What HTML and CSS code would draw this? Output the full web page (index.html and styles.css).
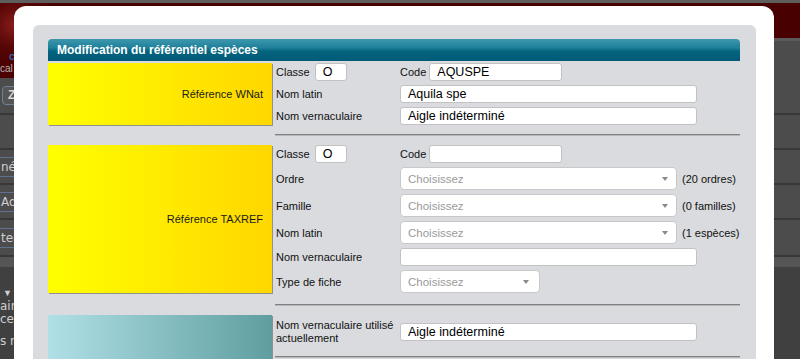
FILE: index.html
```html
<!DOCTYPE html>
<html lang="fr">
<head>
<meta charset="utf-8">
<title>Modification du référentiel espèces</title>
<link rel="stylesheet" href="styles.css">
</head>
<body>
<div class="page">
  <div class="topbar"></div>
  <div class="banner">
    <div class="logo">
      <span class="logo-c">c</span>
      <span class="logo-text">cal</span>
    </div>
    <div class="banner-main">
      <div class="banner-red"></div>
      <div class="banner-gray"></div>
    </div>
  </div>
  <div class="bg-rows">
    <div class="bg-row r1"><span class="bg-btn">Z</span></div>
    <div class="bg-row r2"></div>
    <div class="bg-row r3"><span class="bg-field">né</span></div>
    <div class="bg-row r4"><span class="bg-field">Ad</span></div>
    <div class="bg-row r5"><span class="bg-field">ter</span></div>
    <div class="bg-row r6"></div>
    <div class="bg-row r7">
      <span class="bg-sel">▼</span>
      <span class="bg-line">air</span>
      <span class="bg-line">ces</span>
      <span class="bg-line gap">s r</span>
    </div>
  </div>
</div>

<div class="modal">
  <div class="panel">
    <div class="header">Modification du référentiel espèces</div>

    <div class="section">
      <div class="ref yellow">Référence WNat</div>
      <div class="fields">
        <div class="row">
          <div class="cell">Classe <div class="input w-classe">O</div></div>
          <div class="cell">Code <div class="input w-code">AQUSPE</div></div>
        </div>
        <div class="row">
          <div class="cell">Nom latin</div>
          <div class="cell"><div class="input w-full">Aquila spe</div></div>
        </div>
        <div class="row">
          <div class="cell">Nom vernaculaire</div>
          <div class="cell"><div class="input w-full">Aigle indéterminé</div></div>
        </div>
      </div>
    </div>

    <div class="sep"></div>

    <div class="section">
      <div class="ref yellow">Référence TAXREF</div>
      <div class="fields">
        <div class="row">
          <div class="cell">Classe <div class="input w-classe">O</div></div>
          <div class="cell">Code <div class="input w-code"></div></div>
        </div>
        <div class="row">
          <div class="cell">Ordre</div>
          <div class="cell"><div class="select">Choisissez</div><span class="count">(20 ordres)</span></div>
        </div>
        <div class="row">
          <div class="cell">Famille</div>
          <div class="cell"><div class="select">Choisissez</div><span class="count">(0 familles)</span></div>
        </div>
        <div class="row">
          <div class="cell">Nom latin</div>
          <div class="cell"><div class="select">Choisissez</div><span class="count">(1 espèces)</span></div>
        </div>
        <div class="row">
          <div class="cell">Nom vernaculaire</div>
          <div class="cell"><div class="input w-full"></div></div>
        </div>
        <div class="row">
          <div class="cell">Type de fiche</div>
          <div class="cell"><div class="select w-type">Choisissez</div></div>
        </div>
      </div>
    </div>

    <div class="sep wide"></div>

    <div class="section">
      <div class="ref teal"></div>
      <div class="fields">
        <div class="row tall">
          <div class="cell two-line">Nom vernaculaire utilisé actuellement</div>
          <div class="cell"><div class="input w-full">Aigle indéterminé</div></div>
        </div>
        <div class="sep inner"></div>
        <div class="filler"></div>
      </div>
    </div>
  </div>
</div>
</body>
</html>
```

FILE: styles.css
```css
body {
  margin: 0;
  width: 800px;
  height: 359px;
  overflow: hidden;
  position: relative;
  font-family: "Liberation Sans", Arial, sans-serif;
  background: #404040;
}

/* ---------- background application (dimmed) ---------- */
.page {
  height: 359px;
}
.topbar {
  height: 3px;
  background: #5e5e5e;
}
.banner {
  display: flex;
  height: 75px;
}
.logo {
  width: 48px;
  flex: none;
  background: radial-gradient(circle at 14px 22px, #8a1c1c 0, #6c1010 12px, #560606 24px, #4c0202 40px);
  display: flex;
  flex-direction: column;
  justify-content: flex-end;
  padding-bottom: 2px;
  box-sizing: border-box;
}
.logo-c {
  color: #3d5fa8;
  font-size: 10px;
  font-weight: bold;
  margin-left: 9px;
  line-height: 10px;
}
.logo-text {
  color: #b9b0b0;
  font-size: 10px;
  line-height: 14px;
  margin-left: 0;
}
.banner-main {
  flex: 1;
  display: flex;
  flex-direction: column;
}
.banner-red {
  height: 35px;
  background: #480000;
}
.banner-gray {
  flex: 1;
  background: #4c4c4c;
  border-top: 3px solid #5a5a5a;
}
.bg-row {
  background: #4c4c4c;
  border-bottom: 2px solid #383838;
  box-sizing: border-box;
  display: flex;
  align-items: center;
}
.r1 { height: 37px; }
.r2 { height: 35px; }
.r3 { height: 35px; }
.r4 { height: 35px; }
.r5 { height: 37px; }
.r6 { height: 10px; background: #555; border-bottom: 0; }
.r7 {
  height: 92px;
  background: #404040;
  border-bottom: 0;
  flex-direction: column;
  align-items: flex-start;
  justify-content: flex-start;
  padding-top: 19px;
}
.bg-btn {
  margin-left: 2px;
  height: 17px;
  line-height: 17px;
  padding: 0 5px;
  border: 1px solid #6f7f99;
  border-radius: 4px;
  background: #555;
  color: #d6d6d6;
  font-size: 12px;
  font-weight: bold;
}
.bg-field {
  margin-left: 0;
  height: 18px;
  line-height: 18px;
  padding: 0 1px;
  border-top: 1px solid #5f7190;
  border-bottom: 1px solid #5f7190;
  color: #cfcfcf;
  font-size: 12px;
  font-family: "DejaVu Sans", sans-serif;
}
.bg-sel {
  color: #d0d0d0;
  font-size: 9px;
  line-height: 14px;
  margin-left: 3px;
}
.bg-line {
  color: #cfcfcf;
  font-size: 12px;
  line-height: 13px;
  margin-left: 0;
  font-family: "DejaVu Sans", sans-serif;
}
.bg-line.gap {
  margin-top: 9px;
}

/* ---------- modal ---------- */
.modal {
  position: absolute;
  left: 14px;
  top: 6px;
  width: 760px;
  height: 420px;
  background: #fff;
  border-radius: 12px 12px 0 0;
  box-sizing: border-box;
  padding: 19px 18px 0 19px;
}
.panel {
  height: 100%;
  box-sizing: border-box;
  background: #d9dbde;
  border-radius: 6px 6px 0 0;
  padding: 14px 16px 0 15px;
}
.header {
  height: 22px;
  line-height: 22px;
  border-radius: 4px 4px 0 0;
  background: linear-gradient(#3c98ad 0, #1f809a 40%, #05647f 55%, #005a77 100%);
  color: #fff;
  font-family: "Liberation Sans Narrow", "Liberation Sans", sans-serif;
  font-weight: bold;
  font-size: 12px;
  padding-left: 9px;
  margin-bottom: 2px;
}

.section {
  display: flex;
}
.ref {
  width: 224px;
  flex: none;
  display: flex;
  align-items: center;
  justify-content: flex-end;
  padding-right: 9px;
  box-sizing: border-box;
  font-size: 11px;
  color: #1a1a1a;
  box-shadow: 1px 1px 0 #8f9090;
}
.ref.yellow {
  background: linear-gradient(to right, #ffff00, #ffd700);
}
.ref.teal {
  background: linear-gradient(to right, #b0e0e6, #5f9ea0);
}
.fields {
  flex: 1;
  margin-left: 3px;
}
.row {
  display: grid;
  grid-template-columns: 124px 1fr;
  align-items: center;
  padding-left: 1px;
  margin-bottom: 4px;
  font-size: 11px;
  color: #111;
}
.row:last-child {
  margin-bottom: 0;
}
.row.tall {
  min-height: 30px;
  margin-bottom: 0;
  padding-top: 2px;
}
.cell {
  display: flex;
  align-items: center;
  white-space: nowrap;
}
.cell.two-line {
  white-space: normal;
  line-height: 13px;
  padding-right: 4px;
}
.input {
  height: 18px;
  box-sizing: border-box;
  border: 1px solid #c2c2c2;
  border-radius: 3px;
  background: #fff;
  padding: 0 7px;
  font-size: 12.5px;
  line-height: 16px;
  color: #000;
  white-space: nowrap;
  overflow: hidden;
}
.w-classe {
  width: 32px;
  margin-left: 5px;
}
.w-code {
  width: 133px;
  margin-left: 3px;
}
.w-full {
  width: 297px;
}
.select {
  height: 23px;
  width: 277px;
  box-sizing: border-box;
  border: 1px solid #c8c8c8;
  border-radius: 4px;
  background: #fff;
  padding-left: 7px;
  display: flex;
  align-items: center;
  justify-content: space-between;
  color: #9a9a9a;
  font-size: 11.5px;
}
.select::after {
  content: "";
  border-left: 3.5px solid transparent;
  border-right: 3.5px solid transparent;
  border-top: 4px solid #8a8a8a;
  margin-right: 8px;
}
.select.w-type {
  width: 140px;
}
.select.w-type::after {
  margin-right: 10px;
}
.count {
  margin-left: 5px;
}
.sep {
  margin: 9px 0 9px 227px;
  height: 1px;
  background: #808080;
  border-bottom: 1px solid #b8b9bb;
}
.sep.wide {
  margin-top: 11px;
}
.sep.inner {
  margin: 9px 0 0 0;
}
.filler {
  height: 60px;
}
```
